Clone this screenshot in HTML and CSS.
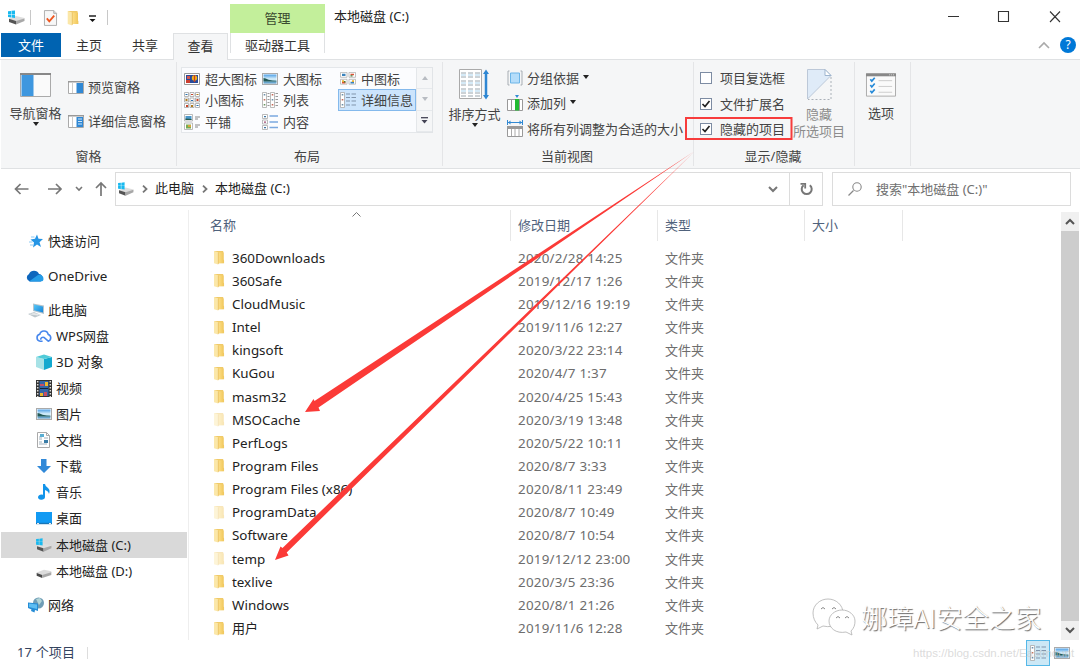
FILE: index.html
```html
<!DOCTYPE html>
<html lang="zh-CN">
<head>
<meta charset="utf-8">
<title>本地磁盘 (C:)</title>
<link rel="stylesheet" href="styles.css">
</head>
<body>
<svg class="defs" width="0" height="0">
  <defs>
    <linearGradient id="gf" x1="0" x2="1"><stop offset="0" stop-color="#ffe18a"/><stop offset="1" stop-color="#f0c75c"/></linearGradient>
    <linearGradient id="gs" x1="0" y1="0" x2="0" y2="1"><stop offset="0" stop-color="#4d9fe6"/><stop offset=".5" stop-color="#d9f0fb"/><stop offset=".7" stop-color="#a9d8ef"/><stop offset="1" stop-color="#3f86b8"/></linearGradient>
    <linearGradient id="gb" x1="0" x2="1" y2="1"><stop offset="0" stop-color="#58c8f7"/><stop offset="1" stop-color="#1583d8"/></linearGradient>
    <symbol id="folder" viewBox="0 0 12 16"><path d="M1 1h9.500v9l.9 1v3H3z" fill="#f0ca68"/><path d="M5 2.500h6V14H5z" fill="url(#gf)"/><path d="M.7 1l4.500 1.500V15.500L.7 14z" fill="#fbe7a8"/><path d="M5.300 2.500V15" stroke="#e3b956" stroke-width=".7"/></symbol>
    <symbol id="disk" viewBox="0 0 16 12"><path d="M0 6l8-3 8 1.500v2L6 10 0 8z" fill="#dcdcdc"/><path d="M0 6.500L6 8.800V12L0 9.600z" fill="#484848"/><path d="M6 8.800l10-3v2.800L6 12z" fill="#a8a8a8"/></symbol>
    <symbol id="cdisk" viewBox="0 0 17 15"><path d="M1 8.500L8 6l8.500 2v1L8 12 1 10z" fill="#dedede"/><path d="M1 8.800L8 11v3.600L1 12z" fill="#555"/><path d="M8 11l8.500-2.600v2.500L8 14.600z" fill="#a8a8a8"/><path d="M0 1.200L3 .9v3H0zM3.500.8L7 .4v3.500H3.500zM0 4.400h3v3.100L0 7.100zM3.500 4.400H7v3.600l-3.500-.4z" fill="#18b9ef"/></symbol>
    <symbol id="pic" viewBox="0 0 16 12"><rect x=".5" y=".5" width="15" height="11" fill="#fff" stroke="#aaa"/><rect x="1.500" y="1.500" width="13" height="9" fill="url(#gs)"/><path d="M1.500 5q2 0 5 1.700 4 .8 8 1v.8h-13z" fill="#245a58"/></symbol>
    <symbol id="thumb" viewBox="0 0 16 16"><g fill="#fff" stroke="#aaa" stroke-width=".8"><path d="M.5.5h6.500v6H.5zM9 .5h6.500v6H9zM.5 9H7v6H.5zM9 9h6.500v6H9z"/></g><path d="M2 2h3.500v3H2zM10.500 12H14v2h-3.500z" fill="#3a83bd"/><path d="M10.500 2H14v2h-3.500zM2 12h3.500v2H2z" fill="#d95438"/><path d="M2 10.300h2v2H2zM12 10.300h2v2h-2z" fill="#e8b12f"/><path d="M10.500 4h2v1.500h-2zM4 11h1.500v2H4z" fill="#427e3c"/></symbol>
    <symbol id="small" viewBox="0 0 16 16"><g fill="#fff" stroke="#a5a5a5" stroke-width=".8"><path d="M.5.5h4v4h-4zM6 .5h4v4H6zM11.500.5h4v4h-4zM.5 6h4v4h-4zM6 6h4v4H6zM11.500 6h4v4h-4zM.5 11.500h4v4h-4zM6 11.500h4v4H6zM11.500 11.500h4v4h-4z"/></g><path d="M1.500 2h2v1h-2zM7 8h2v1H7zM12.500 13h2v1h-2z" fill="#2870ad"/><path d="M7 2h2v1H7zM12.500 7h2v2h-2zM2 13h2v2H2z" fill="#c94428"/><path d="M12.500 2h2v1h-2zM1.500 7h2v2h-2zM7 13h2v2H7z" fill="#af7a1c"/></symbol>
    <symbol id="list" viewBox="0 0 16 16"><path d="M.5.500h4v15h-4zM8.500.500h4v15h-4z" fill="#fff" stroke="#aaa" stroke-width=".8"/><path d="M1.700 2h1.600v1.500H1.700zM9.700 7h1.600v1.500H9.700z" fill="#6b8faa"/><path d="M1.700 7h1.600v1.500H1.700zM9.700 2h1.600v1.500H9.700zM9.700 12h1.600v1.500H9.700z" fill="#c56a5a"/><path d="M1.700 12h1.600v1.500H1.700z" fill="#679360"/><path d="M5.500 1.500h2m-2 3h2m-2 3h2m-2 3h2m-2 3h2m6-12H16m-2.500 3H16m-2.500 3H16m-2.500 3H16m-2.500 3H16" stroke="#999"/></symbol>
    <symbol id="detail" viewBox="0 0 16 16"><path d="M.5.500h4v15h-4z" fill="#fff" stroke="#aaa" stroke-width=".8"/><path d="M1.700 2h1.600v1.500H1.700zM1.700 12h1.600v1.500H1.700z" fill="#6b8faa"/><path d="M1.700 7h1.600v1.500H1.700z" fill="#c56a5a"/><path d="M6 2h4m1.500 0H16M6 5.500h4m1.500 0H16M6 9h4m1.500 0H16M6 13h4m1.500 0H16" stroke="#8195ac"/></symbol>
    <symbol id="tile" viewBox="0 0 16 16"><g fill="#fff" stroke="#aaa" stroke-width=".8"><path d="M.5.500h8v6.500h-8zM.5 9h8v6.500h-8z"/></g><path d="M1.500 2h6v4h-6z" fill="#4b97ca"/><path d="M1.500 4.500l6 .5v1h-6z" fill="#275b4e"/><path d="M2 10.500h5v4H2z" fill="#76aa52"/><path d="M4 11h3v2H4z" fill="#d9a43c"/><path d="M11 3h5m-5 2h3m-3 6h5m-5 2h3" stroke="#888"/></symbol>
    <symbol id="content" viewBox="0 0 16 16"><g fill="#fff" stroke="#aaa" stroke-width=".8"><path d="M.5.500h5v4h-5zM.5 6h5v4h-5zM.5 11.500h5v4h-5z"/></g><path d="M2 2h2v1.300H2zM2 13h2v1.300H2z" fill="#3c75a2"/><path d="M2 7.500h2v1.300H2z" fill="#9d4970"/><path d="M7.500 2H16M7.500 8H16m-8.500 5.500H16" stroke="#7ba8df" stroke-width="1.500"/></symbol>
  </defs>
</svg>

<div class="window">
  <header class="top">
    <div class="quick">
      <svg class="q-disk" width="17" height="15"><use href="#cdisk"/></svg>
      <i class="vline"></i>
      <svg class="q-check" width="13" height="16" viewBox="0 0 14 17"><path d="M.5.5h10l3 3v13H.5z" fill="#f7f7f7" stroke="#aaa"/><path d="M10.500.5v3h3" fill="#ddd" stroke="#aaa"/><path d="M3 9l2.700 3L11 6" fill="none" stroke="#ee5720" stroke-width="2"/></svg>
      <svg class="q-folder" width="12" height="16"><use href="#folder"/></svg>
      <svg class="q-more" width="7" height="8" viewBox="0 0 7 8"><path d="M0 1h7" stroke="#222" stroke-width="1.500"/><path d="M.5 4h6L3.500 7z" fill="#111"/></svg>
      <i class="vline"></i>
    </div>
    <nav class="tabs">
      <span class="tab file">文件</span><span class="tab home">主页</span><span class="tab share">共享</span><span class="tab view">查看</span>
    </nav>
    <div class="manage"><div class="manage-title">管理</div><div class="manage-tab">驱动器工具</div></div>
    <div class="title">本地磁盘 (C:)</div>
    <div class="controls">
      <svg width="114" height="14" viewBox="0 0 114 14" fill="none" stroke="#333" stroke-width="1.100"><path d="M0 6.500h11M50.500 1.500h10v10h-10zM102 1.500l10 10.500m0-10.500l-10 10.500"/></svg>
      <div class="help"><svg width="12" height="8" viewBox="0 0 12 8"><path d="M1 7l5-5 5 5" fill="none" stroke="#aaa" stroke-width="1.600"/></svg><b>?</b></div>
    </div>
  </header>

  <section class="ribbon">
    <div class="group panes">
      <div class="group-body">
        <div class="big nav-pane"><svg width="31" height="24" viewBox="0 0 31 24"><path d="M.5.500h30v23H.5z" fill="#fafafa" stroke="#aaa"/><path d="M0 0h31v2H0z" fill="#888"/><path d="M1.500 2h12v21h-12z" fill="#3e97df"/></svg><span>导航窗格</span><i class="caret"></i></div>
        <div class="pane-list">
          <div><svg width="16" height="13" viewBox="0 0 16 13"><path d="M.5.500h15v12H.5z" fill="#fff" stroke="#aaa"/><path d="M0 0h16v1.500H0z" fill="#999"/><path d="M8.500 2H15v10H8.500z" fill="#3088d4"/><path d="M4.500 2v10" stroke="#ccc"/></svg>预览窗格</div>
          <div><svg width="16" height="13" viewBox="0 0 16 13"><path d="M.5.500h15v12H.5z" fill="#fff" stroke="#aaa"/><path d="M0 0h16v1.500H0z" fill="#999"/><path d="M8.500 2H15v10H8.500z" fill="#3088d4"/><path d="M4.500 2v10" stroke="#ccc"/><path d="M10 4h4m-4 2.500h4M10 9h4" stroke="#cfe6f8"/></svg>详细信息窗格</div>
        </div>
      </div>
      <div class="group-name">窗格</div>
    </div>
    <div class="group layout">
      <div class="group-body">
        <div class="gallery">
          <div class="opt"><svg width="16" height="12" viewBox="0 0 16 12"><path d="M.5.500h15v11H.5z" fill="#fff" stroke="#999"/><path d="M2 2h12v8H2z" fill="#274a9b"/><path d="M2 7h4v3H2z" fill="#cc3e30"/><path d="M3 3h3v3H3z" fill="#d3574f"/><circle cx="10.500" cy="5" r="2.700" fill="#f3b51b"/><path d="M10.500 2v7" stroke="#cc3d22" stroke-width="1.300"/></svg>超大图标</div>
          <div class="opt"><svg width="16" height="12"><use href="#pic"/></svg>大图标</div>
          <div class="opt"><svg width="16" height="13" viewBox="0 0 16 16" preserveAspectRatio="none"><use href="#thumb" width="16" height="16"/></svg>中图标</div>
          <div class="opt"><svg width="16" height="16"><use href="#small"/></svg>小图标</div>
          <div class="opt"><svg width="16" height="16"><use href="#list"/></svg>列表</div>
          <div class="opt selected"><svg width="16" height="16"><use href="#detail"/></svg>详细信息</div>
          <div class="opt"><svg width="16" height="16"><use href="#tile"/></svg>平铺</div>
          <div class="opt"><svg width="16" height="16"><use href="#content"/></svg>内容</div>
        </div>
        <div class="gallery-scroll">
          <span><svg width="6" height="4"><path d="M0 4l3-4 3 4z" fill="#b8bcc2"/></svg></span>
          <span><svg width="6" height="4"><path d="M0 0l3 4 3-4z" fill="#b8bcc2"/></svg></span>
          <span><svg width="7" height="7"><path d="M0 .7h7" stroke="#445" stroke-width="1.300"/><path d="M.5 3l3 3.500 3-3.500z" fill="#445"/></svg></span>
        </div>
      </div>
      <div class="group-name">布局</div>
    </div>
    <div class="group current">
      <div class="group-body">
        <div class="big sort"><svg width="31" height="31" viewBox="0 0 31 31"><path d="M.5.500h22v29H.5z" fill="#fff" stroke="#aaa"/><path d="M2 4h19M2 8h19M2 12h19M2 16h19M2 20h19M2 24h19M2 27h19" stroke="#9aa6ae" stroke-dasharray="5 2"/><path d="M2 6h19M2 14h19M2 22h19" stroke="#abd5ef" stroke-dasharray="5 2"/><path d="M27 3v25" stroke="#2f87d3" stroke-width="2.500"/><path d="M24 5l3-4.500L30 5zM24 26l3 4.500 3-4.500z" fill="#2f87d3"/></svg><span>排序方式</span><i class="caret"></i></div>
        <div class="commands">
          <div><svg width="16" height="16" viewBox="0 0 16 16"><path d="M2.500 1H1v14h1.500M13.500 1H15v14h-1.500" fill="none" stroke="#a7adb3"/><path d="M3.500 3h9v10h-9z" fill="#b5ddfa" stroke="#6cb5e8"/></svg>分组依据<i class="caret"></i></div>
          <div><svg width="16" height="16" viewBox="0 0 16 16"><path d="M.5 4.500h15v11H.5z" fill="#fff" stroke="#999"/><path d="M4.500 4v12M12.500 4v12" stroke="#999"/><path d="M8 4h4v11.500H8z" fill="#22bb32"/><path d="M8 0h4l-2 3z" fill="#3189d3"/></svg>添加列<i class="caret"></i></div>
          <div><svg width="16" height="17" viewBox="0 0 16 17"><path d="M1 2.500h14" stroke="#3189d3"/><path d="M1 2.500L3.500.5v4zM15 2.500L12.500.5v4z" fill="#3189d3"/><path d="M.5 0v5M15.500 0v5" stroke="#3189d3"/><path d="M.5 6.500h15v10H.5z" fill="#fff" stroke="#999"/><path d="M0 6h16v3H0z" fill="#999"/><path d="M4.500 9v7M8 9v7M12 9v7" stroke="#aaa"/></svg>将所有列调整为合适的大小</div>
        </div>
      </div>
      <div class="group-name">当前视图</div>
    </div>
    <div class="group show">
      <div class="group-body">
        <div class="checks">
          <label><i class="box"></i>项目复选框</label>
          <label><i class="box"><svg width="8" height="8" viewBox="0 0 8 8"><path d="M.5 4L3 6.500 7.500 1" fill="none" stroke="#222" stroke-width="1.700"/></svg></i>文件扩展名</label>
          <label><i class="box"><svg width="8" height="8" viewBox="0 0 8 8"><path d="M.5 4L3 6.500 7.500 1" fill="none" stroke="#222" stroke-width="1.700"/></svg></i>隐藏的项目</label>
        </div>
        <div class="big hide"><svg width="25" height="31" viewBox="0 0 25 31"><path d="M.5.500H18l6 6L.5 30z" fill="#dfebf8" stroke="#bcc8d8"/><path d="M18 .5v6h6z" fill="#fff" stroke="#9eb5cf"/><path d="M24 8v22.500H1" fill="none" stroke="#aab1b8" stroke-dasharray="2 2"/></svg><span>隐藏</span><span>所选项目</span></div>
      </div>
      <div class="group-name">显示/隐藏</div>
    </div>
    <div class="group options">
      <div class="group-body"><div class="big"><svg width="30" height="24" viewBox="0 0 31 24"><path d="M.5.500h30v23H.5z" fill="#fafafa" stroke="#aaa"/><path d="M0 0h31v3H0z" fill="#888"/><path d="M24 1.500h5" stroke="#ddd" stroke-dasharray="1 1"/><path d="M4.500 6l1.500 2 3-3.500M4.500 12l1.500 2 3-3.500M4.500 18l1.500 2 3-3.500" fill="none" stroke="#2489d8" stroke-width="1.700"/><path d="M13 7.500h14M13 13.500h14M13 19.500h14" stroke="#ccc"/></svg><span>选项</span></div></div>
    </div>
  </section>

  <section class="address">
    <svg class="arrows" width="93" height="16" viewBox="0 0 93 16" fill="none" stroke="#777" stroke-width="1.700"><path d="M15.500 8H2.500M7.500 3l-5 5 5 5M35 8h13M43 3l5 5-5 5"/><path d="M63 6l3 3 3-3" stroke-width="1.600"/><path d="M88 15V2M83 7l5-5 5 5"/></svg>
    <div class="path">
      <svg width="16" height="14"><use href="#cdisk"/></svg>
      <svg class="chev" width="6" height="8"><path d="M1 .7L4.500 4 1 7.300" fill="none" stroke="#777" stroke-width="1.800"/></svg>
      <span>此电脑</span>
      <svg class="chev" width="6" height="8"><path d="M1 .7L4.500 4 1 7.300" fill="none" stroke="#777" stroke-width="1.800"/></svg>
      <span>本地磁盘 (C:)</span>
      <svg class="drop" width="10" height="7"><path d="M1 1l4 4 4-4" fill="none" stroke="#777" stroke-width="2"/></svg>
      <div class="refresh"><svg width="13" height="14" viewBox="0 0 13 14"><path d="M9.800 3.200A5 5 0 1 1 3.600 3.200" fill="none" stroke="#777" stroke-width="2"/><path d="M.5 1.800h4.700v4.700" fill="none" stroke="#777" stroke-width="1.800"/></svg></div>
    </div>
    <div class="search"><svg width="14" height="14" viewBox="0 0 14 14"><path d="M.5 13.500L5.500 8.500" stroke="#888" stroke-width="1.200"/><circle cx="9" cy="5" r="4.200" fill="none" stroke="#888" stroke-width="1.100"/></svg>搜索"本地磁盘 (C:)"</div>
  </section>

  <main class="main">
    <aside class="tree">
      <div class="node root"><svg width="16" height="16" viewBox="0 0 16 16"><path d="M9 1.500l1.500 4.300 4.500.2-3.500 3.200 1.500 4.800L9 11.500 5 14.500l1-5-3.500-3 4.500-.7z" fill="#2595e5"/><path d="M3 4h3.500M1 9h3.500M2 12h3" stroke="#8bc9f4"/></svg>快速访问</div>
      <div class="node root"><svg class="cloud" width="18" height="12" viewBox="0 0 18 12"><path d="M4 11.500A4 4 0 0 1 3 4 5.500 5.500 0 0 1 13 4a4 4 0 0 1 1.500 7.500z" fill="#0d66bd"/><path d="M3 11.500L12 5a4 4 0 0 1 5.500 4q0 2.500-3 2.500z" fill="#249ce7"/></svg><span class="latin">OneDrive</span></div>
      <div class="node root"><svg class="pc" width="17" height="15" viewBox="0 0 17 15"><path d="M5 .5l11 2v8.500L5 8z" fill="#b5c4cd"/><path d="M6 1.500l9 2v6L6 7.300z" fill="url(#gb)"/><path d="M0 11l6-2 7 3-6 2.500z" fill="#bdc7cc"/><path d="M2 11l8 1M4 10l8 2" stroke="#f5f5f5" stroke-width=".7"/></svg>此电脑</div>
      <div class="node"><svg width="16" height="14" viewBox="0 0 17 14"><path d="M7 12.500H4.500A3.700 3.700 0 0 1 4 5.200a4.600 4.600 0 0 1 9 .2 3.700 3.700 0 0 1 0 7.100L8.500 8.500A2.500 2.500 0 0 0 5 11" fill="none" stroke="#4787ed" stroke-width="1.700"/></svg>WPS网盘</div>
      <div class="node"><svg width="16" height="16" viewBox="0 0 16 16"><path d="M0 3l8 2v11l-8-3z" fill="#a7e2e6"/><path d="M8 5l8-2v10l-8 3z" fill="#12a9cf"/><path d="M0 3l8-2.500L16 3 8 5z" fill="#50cbd8"/></svg><span class="latin">3D 对象</span></div>
      <div class="node"><svg width="16" height="17" viewBox="0 0 16 17"><path d="M0 0h16v17H0z" fill="#333"/><path d="M3.500 1h9v15h-9z" fill="#3466a8"/><path d="M4 4h4v2H4zM8 12h3v4H8z" fill="#c84d64"/><path d="M9 2h3v4H9zM4 13h3v3H4z" fill="#efb72c"/><path d="M4 8.500h8" stroke="#172338"/><path d="M1.700 1v16M14.300 1v16" stroke="#ddd" stroke-width="1.500" stroke-dasharray="1.500 1.500"/></svg>视频</div>
      <div class="node"><svg width="16" height="12"><use href="#pic"/></svg>图片</div>
      <div class="node"><svg width="16" height="16" viewBox="0 0 16 16"><path d="M1.500.500h9l3 3v12h-12z" fill="#fff" stroke="#aaa"/><path d="M10.500.500v3h3" fill="none" stroke="#aaa"/><path d="M3 5h3M3 7h3M8 6h4M3 10h3M3 12h8" stroke="#9fb0bc"/><path d="M4 2h4v3H4z" fill="#5aaed2"/><path d="M8 8h4v3H8z" fill="#397da8"/></svg>文档</div>
      <div class="node"><svg width="16" height="16" viewBox="0 0 16 16"><path d="M5 1h5.500v7H15l-7 7-7-7h4z" fill="#3189d8"/></svg>下载</div>
      <div class="node"><svg width="16" height="16" viewBox="0 0 16 16"><path d="M7 0h2q0 2 3 4 2.500 2 1 6-.5-3-4-4v7a3.500 2.700 0 1 1-2-2.300z" fill="#1294ea"/></svg>音乐</div>
      <div class="node"><svg width="16" height="13" viewBox="0 0 16 13"><path d="M0 0h16v12H0z" fill="#129af3"/><path d="M0 11.500h16" stroke="#1775b6" stroke-width="1.400"/><path d="M1 11.500h2m10 0h2" stroke="#eee"/></svg>桌面</div>
      <div class="node selected"><svg width="16" height="14"><use href="#cdisk"/></svg>本地磁盘 (C:)</div>
      <div class="node"><svg class="d-disk" width="16" height="11"><use href="#disk"/></svg>本地磁盘 (D:)</div>
      <div class="node root network"><svg class="pc" width="17" height="16" viewBox="0 0 17 16"><circle cx="10.500" cy="6" r="5.500" fill="#6f9db6"/><path d="M8 2l4-1 2 3-3 4z" fill="#b2d4d7"/><path d="M0 5.500l10 1V14L7 13l-.5 2.500L3 14l.5-1.500L0 11z" fill="#258cd5"/><path d="M1 6.500l8 1V12l-8-2z" fill="#5dbdf2"/></svg>网络</div>
    </aside>
    <section class="files">
      <div class="head"><span class="h-name">名称<svg width="9" height="5"><path d="M.5 4.500l4-4 4 4" fill="none" stroke="#777"/></svg></span><span>修改日期</span><span>类型</span><span class="h-size">大小</span></div>
      <div class="rows">
        <div class="row"><svg><use href="#folder"/></svg><span>360Downloads</span><time>2020/2/28 14:25</time><em>文件夹</em></div>
        <div class="row"><svg><use href="#folder"/></svg><span>360Safe</span><time>2019/12/17 1:26</time><em>文件夹</em></div>
        <div class="row"><svg><use href="#folder"/></svg><span>CloudMusic</span><time>2019/12/16 19:19</time><em>文件夹</em></div>
        <div class="row"><svg><use href="#folder"/></svg><span>Intel</span><time>2019/11/6 12:27</time><em>文件夹</em></div>
        <div class="row"><svg><use href="#folder"/></svg><span>kingsoft</span><time>2020/3/22 23:14</time><em>文件夹</em></div>
        <div class="row"><svg><use href="#folder"/></svg><span>KuGou</span><time>2020/4/7 1:37</time><em>文件夹</em></div>
        <div class="row"><svg><use href="#folder"/></svg><span>masm32</span><time>2020/4/25 15:43</time><em>文件夹</em></div>
        <div class="row hidden-item"><svg><use href="#folder"/></svg><span>MSOCache</span><time>2020/3/19 13:48</time><em>文件夹</em></div>
        <div class="row"><svg><use href="#folder"/></svg><span>PerfLogs</span><time>2020/5/22 10:11</time><em>文件夹</em></div>
        <div class="row"><svg><use href="#folder"/></svg><span>Program Files</span><time>2020/8/7 3:33</time><em>文件夹</em></div>
        <div class="row"><svg><use href="#folder"/></svg><span>Program Files (x86)</span><time>2020/8/11 23:49</time><em>文件夹</em></div>
        <div class="row hidden-item"><svg><use href="#folder"/></svg><span>ProgramData</span><time>2020/8/7 10:49</time><em>文件夹</em></div>
        <div class="row"><svg><use href="#folder"/></svg><span>Software</span><time>2020/8/7 10:54</time><em>文件夹</em></div>
        <div class="row hidden-item"><svg><use href="#folder"/></svg><span>temp</span><time>2019/12/12 23:00</time><em>文件夹</em></div>
        <div class="row"><svg><use href="#folder"/></svg><span>texlive</span><time>2020/3/5 23:36</time><em>文件夹</em></div>
        <div class="row"><svg><use href="#folder"/></svg><span>Windows</span><time>2020/8/1 21:26</time><em>文件夹</em></div>
        <div class="row"><svg><use href="#folder"/></svg><span class="cjk">用户</span><time>2019/11/6 12:28</time><em>文件夹</em></div>
      </div>
    </section>
    <div class="scroll">
      <span><svg width="10" height="7"><path d="M1 6l4-4 4 4" fill="none" stroke="#555" stroke-width="2"/></svg></span>
      <i></i>
      <span><svg width="10" height="7"><path d="M1 1l4 4 4-4" fill="none" stroke="#555" stroke-width="2"/></svg></span>
    </div>
  </main>

  <footer class="status">
    <span class="count">17 个项目</span><i class="vline"></i>
    <div class="modes">
      <div class="mode on"><svg width="16" height="16"><use href="#detail"/></svg></div>
      <svg width="16" height="12"><use href="#pic"/></svg>
    </div>
  </footer>

  <svg class="annotation" width="1080" height="666" viewBox="0 0 1080 666">
    <g fill="#fb3a37"><path d="M694 151.500L314.500 401l-1-2L305 412l15-1-1.500-3.500z"/><path d="M694 152L282.500 548l-2-1.500L275 560l13.500-4.500-1.800-3z"/></g>
    <path d="M686 118h105.500v21H686z" fill="none" stroke="#f73c3c" stroke-width="2"/>
  </svg>
  <div class="brand">
    <svg width="44" height="38" viewBox="0 0 44 38"><g fill="#fff" stroke="#b0b0b0" stroke-width=".8"><path d="M6 27l-1 4 6-3c13 3 20-5 20-13C31 7 24 1 16 1S1 7 1 15c0 5 2 9 5 12z"/><path d="M39 33l1 4-6-3c-10 2-17-4-17-11 0-6 6-11 13-11s13 5 13 11c0 4-1 7-4 10z"/></g><path d="M9 11q2-3 4 0M20 11q2-3 4 0M24 20q2-3 4 0M33 20q2-3 4 0" fill="none" stroke="#888"/></svg>
    <span>娜璋AI安全之家</span>
  </div>
  <div class="blog">https://blog.csdn.net/Eastmount</div>
</div>
</body>
</html>
```
FILE: styles.css
```css
* { box-sizing: border-box; }
body { margin: 0; background: #fff; font: 13px/20px "Noto Sans", "Noto Sans CJK SC", sans-serif; color: #222; }
svg { display: block; flex: none; overflow: visible; }
i, em { font-style: normal; }
.defs { position: absolute; }
.window { position: relative; width: 1080px; height: 666px; overflow: hidden; display: flex; flex-direction: column; white-space: nowrap; }
.vline { width: 1px; height: 15px; background: #c8c8c8; }
.caret { width: 0; height: 0; border: 3px solid transparent; border-top: 4px solid #222; border-bottom: 0; }

/* title and tabs */
.top { height: 60px; flex: none; display: grid; grid-template: 33px 27px / 230px 95px 1fr auto; border-bottom: 1px solid #dfe1e3; }
.quick { display: flex; align-items: center; padding-left: 8px; padding-top: 2px; }
.quick .vline { margin-left: 5px; }
.q-check { margin-left: 13px; }
.q-folder { margin-left: 10px; }
.q-more { margin: 3px 6px 0 10px; }
.tabs { grid-area: 2 / 1; display: flex; padding-left: 1px; height: 27px; }
.tab { text-align: center; line-height: 25px; height: 24px; color: #333; }
.file { width: 60px; background: #0063b1; color: #fff; line-height: 24px; }
.home { width: 56px; }
.share { width: 56px; }
.view { width: 55px; height: 27px; background: #f5f6f7; border: 1px solid #dfe1e3; border-bottom: 0; line-height: 24px; }
.manage { grid-area: 1 / 2 / 3 / 3; text-align: center; padding-top: 4px; }
.manage-title { background: #c3ef9b; height: 29px; line-height: 29px; color: #3a4a30; }
.manage-tab { height: 20px; line-height: 25px; border: solid #dfe1e3; border-width: 0 1px; color: #333; }
.title { grid-area: 1 / 3; padding: 6px 0 0 9px; font-size: 13px; }
.controls { grid-area: 1 / 4 / 3 / 5; padding: 10px 18px 0 0; }
.help { display: flex; align-items: center; gap: 10px; margin: 13px -14px 0 0; justify-content: flex-end; }
.help b { width: 16px; height: 16px; border-radius: 50%; background: #0078d7; color: #fff; text-align: center; font: 12px/16px "Noto Sans", sans-serif; }

/* ribbon */
.ribbon { height: 109px; flex: none; display: flex; margin-left: 1px; background: #f5f6f7; border-bottom: 1px solid #dfe1e3; color: #444; padding-top: 2px; }
.group { height: 104px; border-right: 1px solid #e4e5e7; display: flex; flex-direction: column; }
.group-body { height: 85px; display: flex; }
.group-name { text-align: center; line-height: 20px; }
.panes { width: 176px; }
.layout { width: 266px; padding-left: 4px; }
.layout .group-name { padding-right: 9px; }
.current { width: 251px; }
.current .group-name, .show .group-name { padding-right: 2px; }
.show { width: 161px; }
.options { width: 56px; }
.big { display: flex; flex-direction: column; align-items: center; line-height: 18px; }
.nav-pane { padding: 11px 0 0 8px; width: 61px; }
.nav-pane span { margin-top: 7px; }
.pane-list { padding: 15px 0 0 6px; }
.pane-list div { display: flex; align-items: center; gap: 4px; height: 20px; margin-bottom: 14px; }
.gallery { width: 236px; height: 66px; margin-top: 5px; border: 1px solid #e4e7ea; background: #fbfcfe; display: grid; grid-template: 21px 22px 21px / 78px 78px 78px; }
.opt { display: flex; align-items: center; gap: 5px; padding-left: 2px; line-height: 18px; }
.opt.selected { background: #cce4fc; border: 1px solid #84b9ec; padding-left: 1px; }
.gallery-scroll { margin-top: 5px; width: 16px; height: 66px; border: 1px solid #e1e4e7; border-left: 0; display: grid; grid-template-rows: repeat(3, 1fr); }
.gallery-scroll span { display: grid; place-items: center; border-bottom: 1px solid #e6e9ec; }
.sort { padding: 7px 0 0 3px; width: 60px; }
.sort span { margin-top: 5px; }
.commands { padding: 5px 0 0 4px; }
.commands div { display: flex; align-items: center; gap: 4px; height: 21px; margin-bottom: 4.5px; }
.commands .caret { margin-top: -2px; }
.checks { padding: 7px 0 0 6px; width: 99px; }
.checks label { height: 18px; margin-bottom: 7.5px; display: flex; align-items: center; gap: 8px; }
.box { width: 12px; height: 12px; border: 1px solid #7d8ca3; background: #fff; display: grid; place-items: center; }
.hide { padding-top: 7px; width: 52px; color: #8c8c8c; line-height: 17px; }
.hide svg { margin-bottom: 6px; }
.options .group-body { padding: 11px 0 0 11px; }
.options span { margin-top: 7px; }

/* address */
.address { height: 41px; flex: none; display: flex; padding: 3px 9px 5px 13px; }
.arrows { margin-top: 9px; }
.path { margin-left: 9px; width: 708px; height: 34px; border: 1px solid #dcdcdc; display: flex; align-items: center; padding-left: 2px; }
.path span { margin-top: -2px; }
.chev { margin: 0 7px 0 8px; }
.drop { margin-left: auto; }
.refresh { width: 33px; height: 32px; border-left: 1px solid #dcdcdc; margin-left: 11px; display: grid; place-items: center; }
.search { margin-left: 9px; width: 239px; height: 34px; border: 1px solid #dcdcdc; display: flex; align-items: center; gap: 14px; padding-left: 15px; color: #707070; }

/* content */
.main { height: 430px; flex: none; display: flex; }
.tree { width: 189px; border-right: 1px solid #eee; padding: 18px 0 0 1px; color: #222; }
.node { height: 26.05px; width: 186px; padding-left: 35px; display: flex; align-items: center; gap: 4px; }
.root { padding-left: 27px; margin-bottom: 8.5px; }
.root:nth-child(3) { margin-bottom: 0; }
.node .cloud { margin: 0 0 0 -2px; }
.node .pc { margin-right: -1px; }
.d-disk { margin-top: 4px; }
.latin { font-size: 13.4px; }
.network { margin-top: 8.5px; }
.node.selected { background: #d9d9d9; }
.files { width: 872px; }
.head { height: 30px; display: grid; grid-template-columns: 322px 147px 147px 98px; color: #50627c; line-height: 31px; }
.head span { border-right: 1px solid #e7e7e7; padding-left: 7px; }
.head .h-name { padding-left: 21px; display: flex; justify-content: space-between; }
.h-name svg { margin: 2px 149px 0 0; }
.rows { padding: 6px 0 0 24px; }
.row { height: 23.16px; display: grid; grid-template-columns: 19px 286px 147px 1fr; align-items: center; color: #222; }
.row svg { width: 12px; height: 15px; }
.row span { font-size: 13.4px; }
.row .cjk { font-size: 13px; }
.row time { font-size: 13.4px; letter-spacing: .22px; color: #6d6d6d; }
.row em { color: #6d6d6d; }
.hidden-item svg { opacity: .45; }
.scroll { width: 18px; margin: 2px 0 0; background: #f0f0f0; display: flex; flex-direction: column; }
.scroll span { height: 19px; display: grid; place-items: center; }
.scroll i { flex: 1; background: #cdcdcd; }

.status { flex: 1; display: flex; align-items: center; padding-left: 17px; color: #34435e; }
.status .count { margin-top: -2px; letter-spacing: .15px; }
.status .vline { margin-left: 12px; background: #ddd; height: 12px; }
.modes { margin-left: auto; display: flex; align-items: center; gap: 4px; padding-right: 10px; }
.mode { width: 24px; height: 26px; display: grid; place-items: center; background: #cce8f6; border: 1px solid #55b8e8; }

/* overlays */
.annotation { position: absolute; left: 0; top: 0; }
.brand { position: absolute; left: 812px; top: 598px; display: flex; align-items: center; gap: 5px; font-family: "Noto Sans CJK SC", sans-serif; font-weight: 300; font-size: 26.3px; line-height: 38px; color: #fff; text-shadow: 1px 1px 1px #666; }
.blog { position: absolute; left: 913px; top: 643px; font: 11.500px/20px "Liberation Sans", sans-serif; color: rgba(200,200,200,.65); }
```
